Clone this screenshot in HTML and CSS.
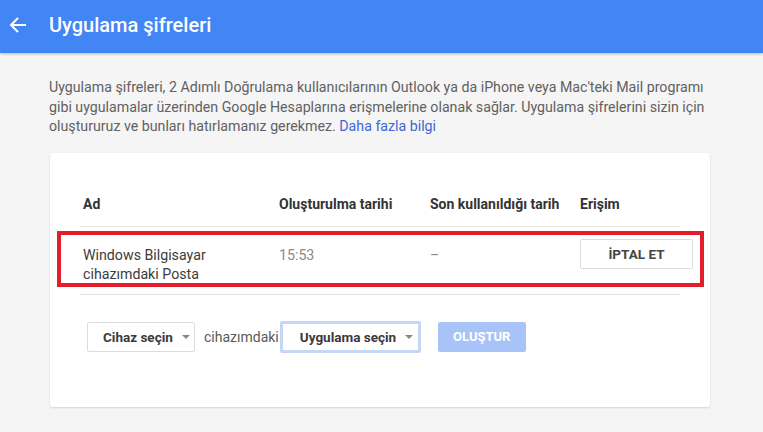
FILE: index.html
```html
<!DOCTYPE html>
<html lang="tr">
<head>
<meta charset="utf-8">
<link rel="stylesheet" href="styles.css">
</head>
<body>
<header class="topbar">
  <svg class="back" width="18" height="18" viewBox="0 0 18 18"><path d="M17 9H2.5M9 2L2 9l7 7" fill="none" stroke="#fff" stroke-width="2"/></svg>
  <h1 class="title">Uygulama şifreleri</h1>
</header>
<main class="content">
  <p class="intro">Uygulama şifreleri, 2 Adımlı Doğrulama kullanıcılarının Outlook ya da iPhone veya Mac'teki Mail programı<br>gibi uygulamalar üzerinden Google Hesaplarına erişmelerine olanak sağlar. Uygulama şifrelerini sizin için<br>oluştururuz ve bunları hatırlamanız gerekmez. <a class="link" href="#">Daha fazla bilgi</a></p>
  <section class="card">
    <div class="table">
      <div class="row head">
        <div class="c1">Ad</div>
        <div class="c2">Oluşturulma tarihi</div>
        <div class="c3">Son kullanıldığı tarih</div>
        <div class="c4">Erişim</div>
      </div>
      <div class="row body">
        <div class="c1">Windows Bilgisayar<br>cihazımdaki Posta</div>
        <div class="c2 muted">15:53</div>
        <div class="c3 muted">–</div>
        <div class="c4 action"><button class="btn revoke">İPTAL ET</button></div>
      </div>
    </div>
    <div class="highlight"></div>
    <div class="controls">
      <button class="btn select">Cihaz seçin <span class="caret"></span></button>
      <span class="mid">cihazımdaki</span>
      <button class="btn select focus">Uygulama seçin <span class="caret"></span></button>
      <button class="btn create">OLUŞTUR</button>
    </div>
  </section>
</main>
</body>
</html>
```
FILE: styles.css
```css
* { box-sizing: border-box; }
html, body { margin: 0; padding: 0; }
body {
  background: #f5f5f5;
  font-family: Roboto, "Noto Sans", Arial, sans-serif;
  width: 763px;
  height: 432px;
  overflow: hidden;
}
.topbar {
  height: 53px;
  background: #4285f4;
  display: flex;
  align-items: center;
  padding-left: 9px;
  box-shadow: 0 1px 3px rgba(0,0,0,0.25);
}
.back { display: block; margin-top: -4px; }
.title {
  margin: -4px 0 0 22px;
  font-size: 20px;
  font-weight: 500;
  color: #fff;
}
.content { padding: 0 0 0 49px; }
.intro {
  margin: 25px 0 0;
  width: 700px;
  font-size: 14.2px;
  line-height: 19.5px;
  color: #616161;
}
.link { color: #3d68d2; text-decoration: none; }
.card {
  position: relative;
  margin-top: 16px;
  margin-left: 1px;
  width: 660px;
  height: 254px;
  background: #fff;
  border-radius: 2px;
  box-shadow: 0 1px 2px rgba(0,0,0,0.13), 0 0 1px rgba(0,0,0,0.08);
  padding: 31px 30px 0;
}
.table { width: 600px; }
.row { display: flex; align-items: flex-start; }
.row > div { padding-left: 3px; flex-shrink: 0; }
.c1 { width: 196px; }
.c2 { width: 151px; }
.c3 { width: 150px; }
.c4 { width: 103px; }
.head {
  font-size: 14px;
  font-weight: 700;
  line-height: 17px;
  color: #333;
  height: 43px;
  padding-top: 12px;
  border-bottom: 1px solid #e4e4e4;
}
.body {
  height: 68px;
  padding-top: 19px;
  font-size: 14.2px;
  line-height: 19.5px;
  color: #3c3c3c;
  border-bottom: 1px solid #e4e4e4;
}
.muted { color: #8a8a8a; }
.action { margin-top: -7px; }
.btn {
  font-family: inherit;
  font-weight: 700;
  font-size: 13px;
  background: #fff;
  border: 1px solid #dcdcdc;
  border-radius: 2px;
  color: #444;
  height: 30px;
  padding: 0;
}
.revoke { width: 113px; font-size: 13.5px; }
.highlight {
  position: absolute;
  left: 7px;
  top: 78px;
  width: 647px;
  height: 56px;
  border: 4px solid #e31e2a;
}
.controls {
  display: flex;
  align-items: center;
  margin-top: 26px;
  padding-left: 7px;
}
.select {
  display: flex;
  align-items: center;
  padding: 0 0 0 15px;
  font-size: 13.5px;
  color: #3a3a3a;
}
.select:first-child { width: 108px; height: 30px; }
.caret {
  display: inline-block;
  margin-left: 9px;
  border-left: 4px solid transparent;
  border-right: 4px solid transparent;
  border-top: 4px solid #888;
}
.mid {
  margin-left: 9px;
  font-size: 14px;
  color: #5a5a5a;
}
.focus {
  width: 141px;
  height: 32px;
  margin-left: 1px;
  border: 3px solid #c6d6f7;
  padding-left: 17px;
}
.create {
  margin-left: 17px;
  width: 88px;
  height: 30px;
  background: #a7c3f8;
  border-color: #a7c3f8;
  color: #fff;
}
```
